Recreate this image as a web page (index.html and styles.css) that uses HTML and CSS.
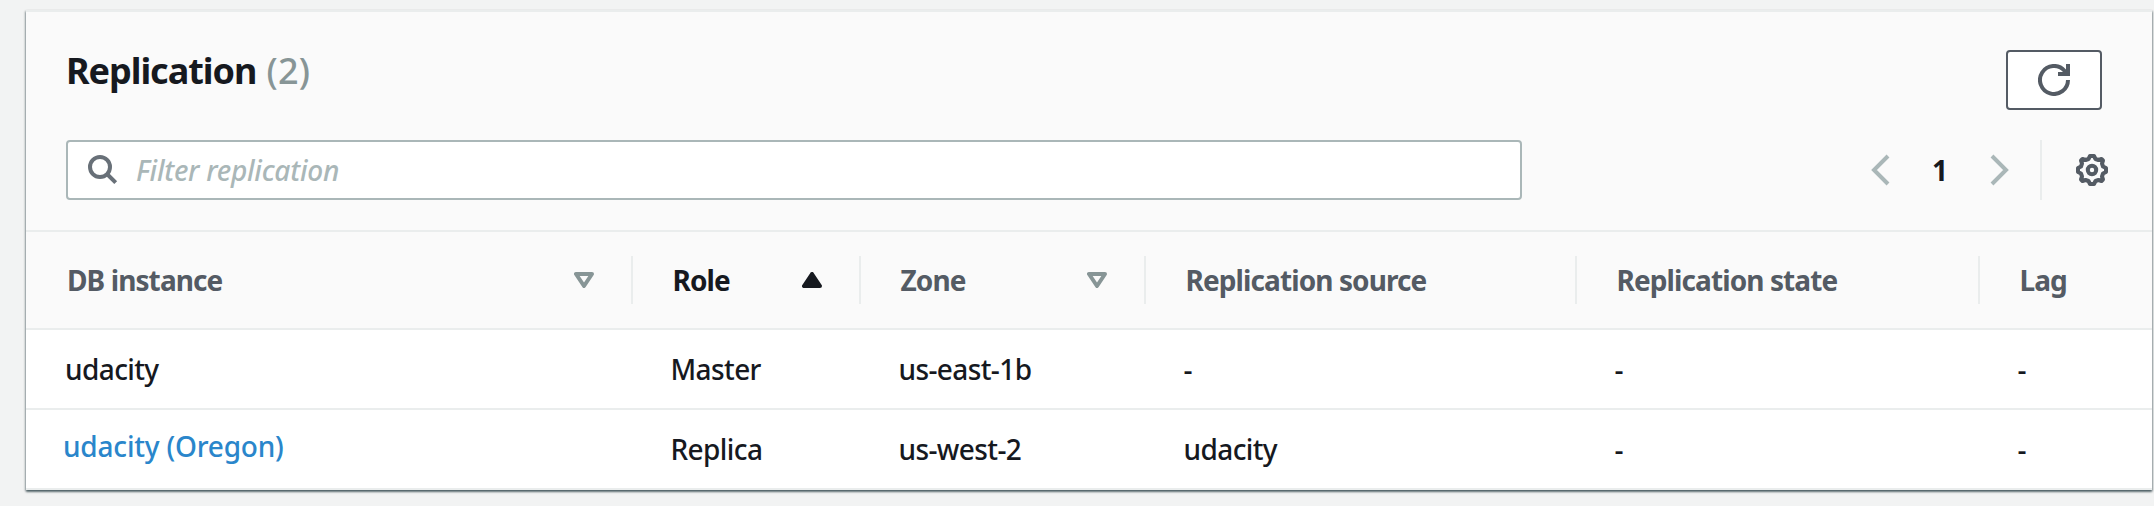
FILE: index.html
```html
<!DOCTYPE html>
<html lang="en">
<head>
<meta charset="utf-8">
<title>Replication</title>
<link rel="stylesheet" href="styles.css">
</head>
<body>
<section class="card">
  <header class="card-header">
    <div class="title-row">
      <h2 class="title">Replication <span class="count">(2)</span></h2>
      <button class="refresh" aria-label="Refresh">
        <svg width="32" height="32" viewBox="0 0 32 32" fill="none" stroke="currentColor" stroke-width="4">
          <path d="M30 16A14 14 0 1 1 26.500 6.700L29 9.500"/><path d="M20 10H30V0"/>
        </svg>
      </button>
    </div>
    <div class="tools-row">
      <label class="search">
        <svg width="30" height="30" viewBox="0 0 30 30" fill="none" stroke="currentColor" stroke-width="4">
          <circle cx="12" cy="12" r="10"/><path d="M19 19L27.700 27.700"/>
        </svg>
        <span class="placeholder">Filter replication</span>
      </label>
      <nav class="pager">
        <svg class="chevron" width="20" height="32" viewBox="0 0 20 32"><path d="M18 2L4 16L18 30"/></svg>
        <span class="page">1</span>
        <svg class="chevron" width="20" height="32" viewBox="0 0 20 32"><path d="M2 2L16 16L2 30"/></svg>
        <span class="divider"></span>
        <svg class="gear" width="32" height="32" viewBox="0 0 32 32" fill="none" stroke="currentColor" stroke-width="4" stroke-linejoin="round">
          <path d="M14 2H18L19.500 5L22.500 6L25.500 5L27 6.500L26 9.500L27 12.500L30 14V18L27 19.500L26 22.500L27 25.500L25.500 27L22.500 26L19.500 27L18 30H14L12.500 27L9.500 26L6.500 27L5 25.500L6 22.500L5 19.500L2 18V14L5 12.500L6 9.500L5 6.500L6.500 5L9.500 6L12.500 5Z"/>
          <circle cx="16" cy="16" r="4.200"/>
        </svg>
      </nav>
    </div>
  </header>
  <div class="row head">
    <div class="cell">DB instance<svg class="sort" width="20" height="16" viewBox="0 0 20 16"><path d="M2 2H18L10 14Z"/></svg></div>
    <div class="cell active">Role<svg class="sort filled" width="20" height="16" viewBox="0 0 20 16"><path d="M2 14H18L10 2Z"/></svg></div>
    <div class="cell">Zone<svg class="sort" width="20" height="16" viewBox="0 0 20 16"><path d="M2 2H18L10 14Z"/></svg></div>
    <div class="cell">Replication source</div>
    <div class="cell">Replication state</div>
    <div class="cell">Lag</div>
  </div>
  <div class="row">
    <div class="cell">udacity</div>
    <div class="cell">Master</div>
    <div class="cell">us-east-1b</div>
    <div class="cell">-</div>
    <div class="cell">-</div>
    <div class="cell">-</div>
  </div>
  <div class="row">
    <div class="cell link-cell"><a class="link">udacity (Oregon)</a></div>
    <div class="cell">Replica</div>
    <div class="cell">us-west-2</div>
    <div class="cell">udacity</div>
    <div class="cell">-</div>
    <div class="cell">-</div>
  </div>
</section>
</body>
</html>
```
FILE: styles.css
```css
* { box-sizing: border-box; }
body {
  margin: 0;
  padding: 10px 2px 16px 26px;
  background: #f2f3f3;
  color: #16191f;
  font: 500 28px/40px "Noto Sans", sans-serif;
}
.card {
  height: 480px;
  background: #fff;
  border-top: 2px solid #eaeded;
  box-shadow: 0 2px 2px 0 rgba(0, 28, 36, .5), 1px 1px 2px 0 rgba(0, 28, 36, .25), -1px 1px 2px 0 rgba(0, 28, 36, .25);
}
.card-header {
  height: 220px;
  padding: 37px 44px 0 40px;
  background: #fafafa;
  border-bottom: 2px solid #eaeded;
}
.title-row { display: flex; justify-content: space-between; height: 91px; padding-right: 6px; }
.title { margin: 0; font-size: 36px; line-height: 44px; font-weight: 700; letter-spacing: -1.05px; }
.count { margin-left: 2px; color: #879596; font-weight: 500; letter-spacing: .2px; }
.refresh {
  display: flex;
  align-items: center;
  justify-content: center;
  width: 96px;
  height: 60px;
  margin-top: 1px;
  padding: 0;
  background: #fff;
  border: 2px solid #545b64;
  border-radius: 4px;
  color: #545b64;
}
.tools-row { display: flex; justify-content: space-between; }
.search {
  display: flex;
  align-items: center;
  gap: 18px;
  width: 1456px;
  height: 60px;
  padding-left: 20px;
  background: #fff;
  border: 2px solid #aab7b8;
  border-radius: 4px;
  color: #687078;
}
.placeholder { color: #aab7b8; font-style: italic; letter-spacing: -.25px; }
.pager { display: flex; align-items: center; }
.chevron { fill: none; stroke: #aab7b8; stroke-width: 4; }
.page { width: 100px; text-align: center; font-weight: 700; }
.divider { width: 2px; height: 60px; margin: 0 34px 0 30px; background: #eaeded; }
.gear { color: #545b64; }
.row {
  display: grid;
  grid-template-columns: 607px 228px 285px 431px 403px 1fr;
  height: 80px;
  border-bottom: 2px solid #eaeded;
}
.cell { display: flex; align-items: center; padding-left: 37.500px; letter-spacing: -.6px; }
.cell:first-child { padding-left: 39px; }
.head { height: 98px; background: #fafafa; align-items: center; }
.head .cell {
  justify-content: space-between;
  height: 48px;
  padding-left: 39.500px;
  padding-right: 37px;
  border-right: 2px solid #eaeded;
  color: #545b64;
  font-weight: 700;
  letter-spacing: -.9px;
}
.head .cell:first-child { padding-left: 41px; }
.head .cell:last-child { border-right: 0; }
.head .active { color: #16191f; }
.sort { fill: none; stroke: #879596; stroke-width: 4; stroke-linejoin: round; }
.sort.filled { fill: #16191f; stroke: #16191f; }
.row .link-cell { padding: 0 0 6px 37px; }
.link { color: #2a86cb; letter-spacing: -.2px; }
```
